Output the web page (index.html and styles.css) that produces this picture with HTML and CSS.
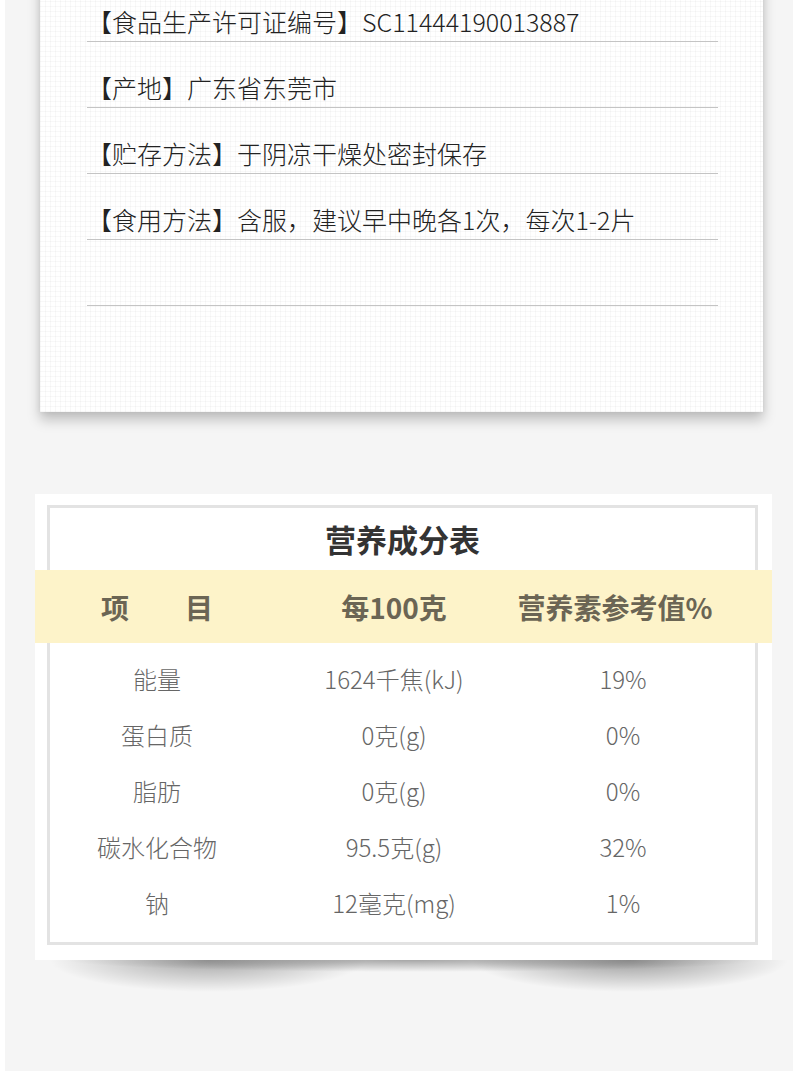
FILE: index.html
```html
<!DOCTYPE html>
<html lang="zh-CN">
<head>
<meta charset="utf-8">
<title>产品信息</title>
<link rel="stylesheet" href="styles.css">
</head>
<body>
<div class="page">
  <section class="info-card">
    <div class="info-row">【食品生产许可证编号】SC11444190013887</div>
    <div class="info-row">【产地】广东省东莞市</div>
    <div class="info-row">【贮存方法】于阴凉干燥处密封保存</div>
    <div class="info-row">【食用方法】含服，建议早中晚各1次，每次1-2片</div>
    <div class="info-row"></div>
  </section>

  <section class="nutrition">
    <div class="nutrition-inner">
      <h2 class="nutrition-title">营养成分表</h2>
      <div class="nutrition-head">
        <span>项　　目</span>
        <span>每100克</span>
        <span>营养素参考值%</span>
      </div>
      <div class="nutrition-body">
        <div class="nutrition-row"><span>能量</span><span>1624千焦(kJ)</span><span>19%</span></div>
        <div class="nutrition-row"><span>蛋白质</span><span>0克(g)</span><span>0%</span></div>
        <div class="nutrition-row"><span>脂肪</span><span>0克(g)</span><span>0%</span></div>
        <div class="nutrition-row"><span>碳水化合物</span><span>95.5克(g)</span><span>32%</span></div>
        <div class="nutrition-row"><span>钠</span><span>12毫克(mg)</span><span>1%</span></div>
      </div>
    </div>
  </section>
  <div class="lift-shadow"></div>
</div>
</body>
</html>
```

FILE: styles.css
```css
html, body {
  margin: 0;
  padding: 0;
  background: #ffffff;
}

body {
  font-family: "Noto Sans CJK SC", "Noto Sans", sans-serif;
}

.page {
  margin: 0 7px 0 5px;
  background: #f5f5f5;
  min-height: 1071px;
  overflow: hidden;
}

/* top information card */
.info-card {
  margin: -24px 30px 0 35px;
  padding: 0 45px 106px 47px;
  background-color: #ffffff;
  background-image:
    linear-gradient(rgba(0, 0, 0, 0.028) 1px, transparent 1px),
    linear-gradient(90deg, rgba(0, 0, 0, 0.028) 1px, transparent 1px);
  background-size: 5px 5px;
  box-shadow: 0 8px 12px rgba(0, 0, 0, 0.22), 0 0 6px rgba(0, 0, 0, 0.08);
}

.info-row {
  box-sizing: border-box;
  height: 66px;
  display: flex;
  align-items: flex-end;
  padding-bottom: 5px;
  border-bottom: 1px solid #c4c4c4;
  font-size: 25px;
  font-weight: 300;
  line-height: 30px;
  color: #222222;
  white-space: nowrap;
}

/* nutrition table */
.nutrition {
  margin: 82px 21px 0 30px;
  padding: 11px 14px 15px 12px;
  background: #ffffff;
}

.nutrition-inner {
  border: 3px solid #e3e3e3;
}

.nutrition-title {
  margin: 0;
  height: 62px;
  box-sizing: border-box;
  padding-top: 2px;
  line-height: 58px;
  text-align: center;
  font-size: 31px;
  font-weight: 700;
  color: #333333;
}

.nutrition-head,
.nutrition-row {
  display: grid;
  justify-items: center;
  white-space: nowrap;
}

.nutrition-head {
  grid-template-columns: 214px 260px 182px;
  margin: 0 -17px 0 -15px;
  padding: 0 17px 0 15px;
  height: 73px;
  align-items: center;
  background: #fdf3c9;
  font-size: 28px;
  font-weight: 700;
  color: #6b6554;
}

.nutrition-body {
  padding: 7px 0 12px;
}

.nutrition-row {
  grid-template-columns: 214px 260px 198px;
  height: 56px;
  align-items: center;
  font-size: 24px;
  font-weight: 300;
  color: #666666;
}

.lift-shadow {
  height: 32px;
  margin: 0 5px 0 30px;
  background:
    radial-gradient(46% 12px at 50% 0%, rgba(0, 0, 0, 0.32), rgba(0, 0, 0, 0)),
    radial-gradient(21% 100% at 23% 0%, rgba(0, 0, 0, 0.32), rgba(0, 0, 0, 0)),
    radial-gradient(21% 100% at 79% 0%, rgba(0, 0, 0, 0.36), rgba(0, 0, 0, 0));
}
```
